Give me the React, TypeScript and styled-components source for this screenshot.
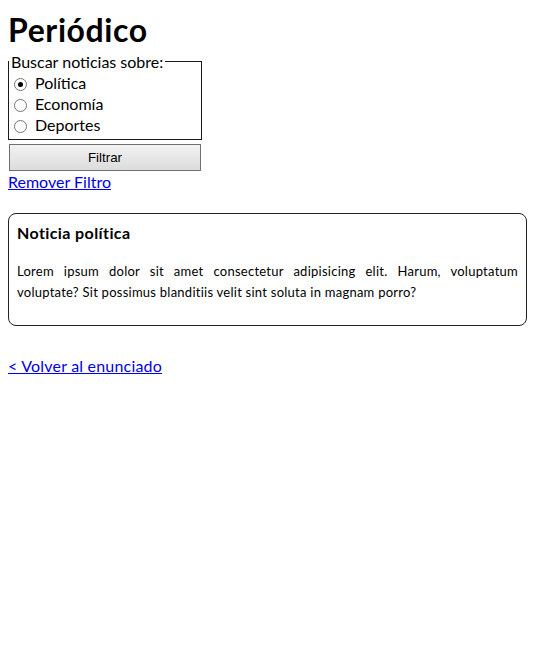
import React from "react";
import styled, { createGlobalStyle } from "styled-components";

const Global = createGlobalStyle`
  html, body { background: #fff; }
  body {
    margin: 8px;
    font-family: "Segoe UI", Lato, "Open Sans", sans-serif;
    font-size: 16px;
    line-height: 21px;
    color: #000;
  }
`;

const Title = styled.h1`
  margin: 0;
  font-size: 32px;
  line-height: 43px;
  font-weight: 700;
  letter-spacing: 0.6px;
`;

const FilterForm = styled.form`
  width: 194px;
`;

const Fieldset = styled.fieldset`
  margin: 0;
  padding: 0 0 4px 0;
  border: 1px solid #1a1a1a;
  min-width: 0;
`;

const Legend = styled.legend`
  padding: 0 2px;
  margin-left: 0;
`;

const OptionRow = styled.label`
  display: block;
  line-height: 21px;
`;

const Radio = styled.input`
  appearance: none;
  width: 13px;
  height: 13px;
  margin: 0 8px 0 5px;
  border: 1px solid #767676;
  border-radius: 50%;
  vertical-align: -2px;
  background: #fff;
  position: relative;
  &:checked::after {
    content: "";
    position: absolute;
    left: 3px;
    top: 3px;
    width: 5px;
    height: 5px;
    border-radius: 50%;
    background: #000;
  }
`;

const FilterButton = styled.button`
  display: block;
  width: 192px;
  height: 27px;
  margin: 4px 1px 0;
  border: 1px solid #707070;
  background: linear-gradient(#f2f2f2, #dcdcdc);
  font-family: "Liberation Sans", Arial, sans-serif;
  font-size: 13.33px;
  color: #000;
  padding: 0;
`;

const Link = styled.a`
  color: #0000ee;
  text-decoration: underline;
`;

const BlockLink = styled(Link)<{ $top?: number; $spacing?: number }>`
  display: inline-block;
  margin-top: ${(p) => p.$top ?? 0}px;
  line-height: 21px;
  letter-spacing: ${(p) => p.$spacing ?? 0}px;
`;

const Card = styled.article`
  margin-top: 21px;
  border: 1px solid #222;
  border-radius: 8px;
  padding: 8px;
`;

const CardTitle = styled.h3`
  margin: 0 0 18px;
  font-size: 16px;
  line-height: 21px;
  font-weight: 700;
  letter-spacing: 0.4px;
`;

const CardText = styled.p`
  margin: 0 0 14px;
  font-size: 13px;
  line-height: 21px;
  text-align: justify;
  letter-spacing: 0.25px;
`;

const Section = styled.div``;

export default function App() {
  return (
    <>
      <Global />
      <Title>Periódico</Title>
      <FilterForm onSubmit={(e) => e.preventDefault()}>
        <Fieldset>
          <Legend>Buscar noticias sobre:</Legend>
          <OptionRow>
            <Radio type="radio" name="tema" defaultChecked />
            Política
          </OptionRow>
          <OptionRow>
            <Radio type="radio" name="tema" />
            Economía
          </OptionRow>
          <OptionRow>
            <Radio type="radio" name="tema" />
            Deportes
          </OptionRow>
        </Fieldset>
        <FilterButton type="submit">Filtrar</FilterButton>
      </FilterForm>
      <Section>
        <BlockLink href="#">Remover Filtro</BlockLink>
      </Section>
      <Card>
        <CardTitle>Noticia política</CardTitle>
        <CardText>
          Lorem ipsum dolor sit amet consectetur adipisicing elit. Harum, voluptatum
          voluptate? Sit possimus blanditiis velit sint soluta in magnam porro?
        </CardText>
      </Card>
      <Section>
        <BlockLink href="#" $top={29} $spacing={0.2}>
          &lt; Volver al enunciado
        </BlockLink>
      </Section>
    </>
  );
}
